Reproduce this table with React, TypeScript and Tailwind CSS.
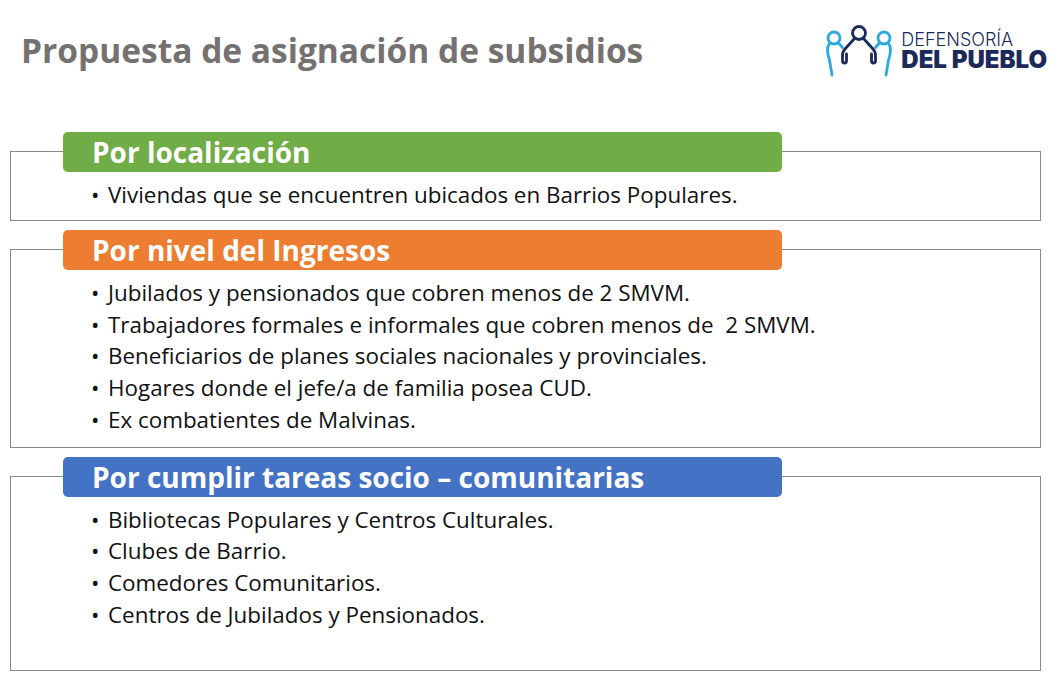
const sections = [
  {
    title: "Por localización",
    color: "bg-[#70ad47]",
    items: ["Viviendas que se encuentren ubicados en Barrios Populares."],
    pad: "pb-[9px]",
  },
  {
    title: "Por nivel del Ingresos",
    color: "bg-[#ed7d31]",
    items: [
      "Jubilados y pensionados que cobren menos de 2 SMVM.",
      "Trabajadores formales e informales que cobren menos de  2 SMVM.",
      "Beneficiarios de planes sociales nacionales y provinciales.",
      "Hogares donde el jefe/a de familia posea CUD.",
      "Ex combatientes de Malvinas.",
    ],
    pad: "pb-[11px]",
  },
  {
    title: "Por cumplir tareas socio – comunitarias",
    color: "bg-[#4472c4]",
    items: [
      "Bibliotecas Populares y Centros Culturales.",
      "Clubes de Barrio.",
      "Comedores Comunitarios.",
      "Centros de Jubilados y Pensionados.",
    ],
    pad: "pb-[39px]",
  },
];

const Logo = () => (
  <div className="flex items-start">
    <svg width="80" height="60" viewBox="0 0 80 60" fill="none" strokeLinecap="round" strokeLinejoin="round">
      <g stroke="#29abe2" strokeWidth="2.8">
        <circle cx="15" cy="18" r="6" />
        <path d="M10.5 23.5 C7.5 27 8.5 34 10.5 40 L13 55" />
        <path d="M19.5 23 L23.5 27.5" />
        <circle cx="65" cy="18" r="6" />
        <path d="M69.5 23.5 C72.5 27 71.5 34 69.5 40 L67 55" />
        <path d="M60.5 23 L56.5 27.5" />
      </g>
      <g stroke="#1b2a5a" strokeWidth="2.8">
        <circle cx="40" cy="13" r="6.5" />
        <path d="M35.5 18.5 L26 29 C24 31 23.5 33 23.5 36 L23.5 41 A2 2 0 0 0 27.5 41 L27.5 34" />
        <path d="M44.5 18.5 L54 29 C56 31 56.5 33 56.5 36 L56.5 41 A2 2 0 0 1 52.5 41 L52.5 34" />
      </g>
    </svg>
    <div className="ml-[2px] flex flex-col font-['Inter',sans-serif] text-[#1b2a5a]">
      <span className="mt-[9px] text-[18px] font-light leading-[22px]">DEFENSORÍA</span>
      <span className="text-[24px] font-black leading-[18px]">DEL PUEBLO</span>
    </div>
  </div>
);

export default function App() {
  return (
    <div className="min-h-[683px] w-[1059px] bg-white font-['Open_Sans',sans-serif]">
      <div className="flex h-[132px] items-start justify-between pr-[12px]">
        <h1 className="pl-[21px] pt-[28px] text-[33.5px] font-bold leading-[44px] text-[#767171]">
          Propuesta de asignación de subsidios
        </h1>
        <div className="pt-[20px]">
          <Logo />
        </div>
      </div>
      <div className="flex flex-col gap-[9px] pl-[10px] pr-[18px]">
        {sections.map((s) => (
          <section key={s.title} className="flex flex-col">
            <div
              className={`relative z-10 ml-[53px] flex h-[40px] w-[719px] items-center rounded-[5px] pl-[29px] ${s.color}`}
            >
              <h2 className="text-[28px] font-bold leading-none text-white">{s.title}</h2>
            </div>
            <div className={`-mt-[21px] border-[1.5px] border-[#8a8a8a] pt-[27px] ${s.pad}`}>
              <ul className="pl-[80px] text-[22.4px] leading-[31.75px] text-[#111]">
                {s.items.map((it) => (
                  <li key={it} className="flex whitespace-pre">
                    <span className="w-[17px] shrink-0">•</span>
                    <span>{it}</span>
                  </li>
                ))}
              </ul>
            </div>
          </section>
        ))}
      </div>
    </div>
  );
}
